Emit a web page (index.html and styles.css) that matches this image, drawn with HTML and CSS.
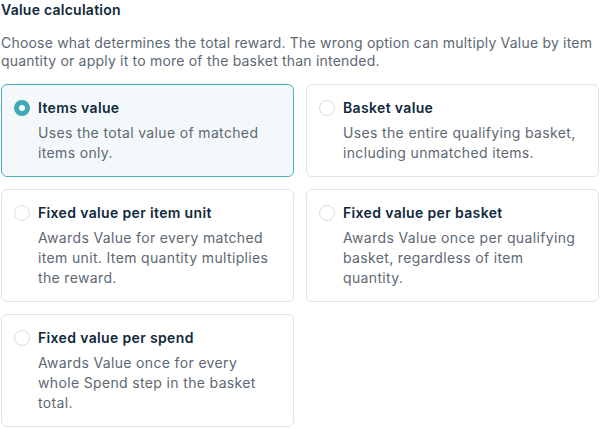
FILE: index.html
```html
<!DOCTYPE html>
<html lang="en">
<head>
    <meta charset="UTF-8">
    <meta name="viewport" content="width=device-width, initial-scale=1.0">
    <title>Value calculation</title>
    <link rel="stylesheet" href="styles.css">
</head>
<body>
    <div class="section">
        <h3 class="section-title">Value calculation</h3>
        <p class="section-help">Choose what determines the total reward. The wrong option can multiply Value by item quantity or apply it to more of the basket than intended.</p>

        <div class="options">
            <label class="option selected">
                <input type="radio" name="calc" value="items" checked>
                <span class="option-title">Items value</span>
                <span class="option-desc">Uses the total value of matched items only.</span>
            </label>
            <label class="option">
                <input type="radio" name="calc" value="basket">
                <span class="option-title">Basket value</span>
                <span class="option-desc">Uses the entire qualifying basket, including unmatched items.</span>
            </label>
            <label class="option">
                <input type="radio" name="calc" value="unit">
                <span class="option-title">Fixed value per item unit</span>
                <span class="option-desc">Awards Value for every matched item unit. Item quantity multiplies the reward.</span>
            </label>
            <label class="option">
                <input type="radio" name="calc" value="per-basket">
                <span class="option-title">Fixed value per basket</span>
                <span class="option-desc">Awards Value once per qualifying basket, regardless of item quantity.</span>
            </label>
            <label class="option">
                <input type="radio" name="calc" value="spend">
                <span class="option-title">Fixed value per spend</span>
                <span class="option-desc">Awards Value once for every whole Spend step in the basket total.</span>
            </label>
        </div>
    </div>
</body>
</html>
```

FILE: styles.css
```css
body {
    margin: 0;
    font-family: Inter, "Noto Sans", sans-serif;
    background: #ffffff;
    color: #10293b;
}
.section {
    padding: 0 1px;
}
.section-title {
    margin: 0;
    font-size: 14px;
    line-height: 20px;
    font-weight: 600;
    letter-spacing: 0.25px;
    color: #10293b;
}
.section-help {
    margin: 14px 0 15px;
    font-size: 14px;
    line-height: 17.5px;
    letter-spacing: 0.2px;
    color: #5d6873;
}
.options {
    display: grid;
    grid-template-columns: 1fr 1fr;
    gap: 12px;
}
.option {
    display: grid;
    grid-template-columns: 16px 1fr;
    align-content: start;
    column-gap: 8px;
    row-gap: 5px;
    align-items: center;
    padding: 13px 12px;
    border: 1px solid #e1e3e5;
    border-radius: 6px;
    background: #ffffff;
    cursor: pointer;
}
.option.selected {
    border-color: #4ab4bd;
    background: #f3f9fa;
}
.option input {
    appearance: none;
    margin: 0;
    width: 16px;
    height: 16px;
    box-sizing: border-box;
    border: 1px solid #dadde0;
    border-radius: 50%;
    background: #ffffff;
}
.option input:checked {
    border: 5px solid #3eaab6;
}
.option-title {
    font-size: 14px;
    line-height: 20px;
    font-weight: 600;
    letter-spacing: 0.35px;
    color: #10293b;
}
.option-desc {
    grid-column: 2;
    font-size: 14px;
    line-height: 20px;
    letter-spacing: 0.35px;
    color: #5d6873;
}
```
